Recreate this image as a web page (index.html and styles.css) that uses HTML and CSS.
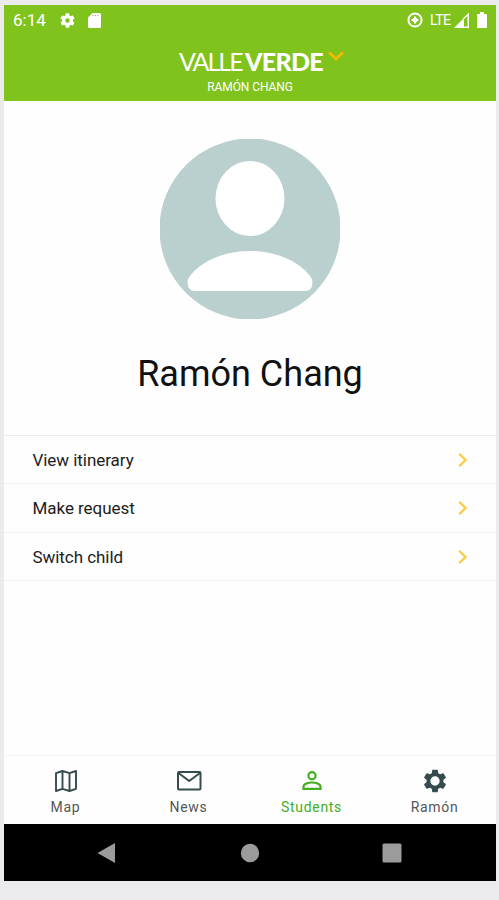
FILE: index.html
```html
<!DOCTYPE html>
<html lang="en">
  <head>
    <meta charset="UTF-8" />
    <meta name="viewport" content="width=device-width, initial-scale=1.0" />
    <title>Valle Verde - Students</title>
    <link rel="stylesheet" href="styles.css">
  </head>
  <body>
    <div class="phone">
      <header>
        <div class="status-bar">
          <span class="time">6:14</span>
          <svg class="status-gear" viewBox="2 2 20 20" fill="currentColor"><path d="M19.14 12.94c.04-.3.06-.61.06-.94 0-.32-.02-.64-.07-.94l2.03-1.58c.18-.14.23-.41.12-.61l-1.92-3.32c-.12-.22-.37-.29-.59-.22l-2.39.96c-.5-.38-1.03-.7-1.62-.94l-.36-2.54c-.04-.24-.24-.41-.48-.41h-3.84c-.24 0-.43.17-.47.41l-.36 2.54c-.59.24-1.13.57-1.62.94l-2.39-.96c-.22-.08-.47 0-.59.22L2.74 8.87c-.12.21-.08.47.12.61l2.03 1.58c-.05.3-.09.63-.09.94s.02.64.07.94l-2.03 1.58c-.18.14-.23.41-.12.61l1.92 3.32c.12.22.37.29.59.22l2.39-.96c.5.38 1.03.7 1.62.94l.36 2.54c.05.24.24.41.48.41h3.84c.24 0 .44-.17.47-.41l.36-2.54c.59-.24 1.13-.56 1.62-.94l2.39.96c.22.08.47 0 .59-.22l1.92-3.32c.12-.22.07-.47-.12-.61l-2.01-1.58zM12 15a3 3 0 1 1 0-6 3 3 0 0 1 0 6z" /></svg>
          <svg class="status-card" viewBox="0 0 13 15" fill="currentColor"><path fill-rule="evenodd" d="M4.500 0H11.500a1.500 1.500 0 0 1 1.500 1.500v12a1.500 1.500 0 0 1-1.500 1.500h-10A1.500 1.500 0 0 1 0 13.500V4.500zM4.500 2v1h1V2zM7 2v1h1V2zM9.500 2v1h1V2z" /></svg>
          <span class="spacer"></span>
          <svg class="status-sync" viewBox="0 0 16 16" fill="none" stroke="currentColor"><circle cx="8" cy="8" r="6.600" stroke-width="2" /><path d="M8 4.600v6.800M4.600 8h6.800" stroke-width="2" /><circle cx="8" cy="8" r="2" stroke-width="1.200" /></svg>
          <span class="network">LTE</span>
          <svg class="status-signal" viewBox="0 0 15 15"><path d="M0 15 10 5v10z" fill="currentColor" /><path d="M9.500 5.700 14.200 1.200v13H10" fill="none" stroke="currentColor" stroke-width="1.400" /></svg>
          <svg class="status-battery" viewBox="0 0 10 16" fill="currentColor"><path d="M3 0h4v2h2a1 1 0 0 1 1 1v12a1 1 0 0 1-1 1H1a1 1 0 0 1-1-1V3a1 1 0 0 1 1-1h2z" /></svg>
        </div>
        <div class="brand">
          <span class="brand-light">VALLE</span>
          <span class="brand-bold">VERDE</span>
          <svg class="brand-arrow" viewBox="0 0 16 10" fill="none"><path d="M1 1.200 8 8l7-6.800" stroke="currentColor" stroke-width="2.600" /></svg>
        </div>
        <div class="brand-student">RAMÓN CHANG</div>
      </header>

      <main>
        <section class="profile">
          <svg class="avatar" viewBox="0 0 180 180">
            <circle cx="90" cy="90" r="90.500" fill="#b9d0ce" />
            <ellipse cx="90" cy="59.500" rx="34.500" ry="37.500" fill="#fff" />
            <path d="M28 140C39 122 65 112 90 112s51 10 62 28c1.500 7-1 12-7 12H35c-6 0-8.500-5-7-12z" fill="#fff" />
          </svg>
          <h1>Ramón Chang</h1>
        </section>

        <ul class="menu">
          <li>
            <span>View itinerary</span>
            <svg class="chevron" viewBox="0 0 10 16" fill="none"><path d="M1.200 1.800 7.500 8l-6.300 6.200" stroke="currentColor" stroke-width="2.300" /></svg>
          </li>
          <li>
            <span>Make request</span>
            <svg class="chevron" viewBox="0 0 10 16" fill="none"><path d="M1.200 1.800 7.500 8l-6.300 6.200" stroke="currentColor" stroke-width="2.300" /></svg>
          </li>
          <li>
            <span>Switch child</span>
            <svg class="chevron" viewBox="0 0 10 16" fill="none"><path d="M1.200 1.800 7.500 8l-6.300 6.200" stroke="currentColor" stroke-width="2.300" /></svg>
          </li>
        </ul>
      </main>

      <nav class="tabs">
        <a class="tab">
          <svg viewBox="0 0 28 28" fill="none" stroke="currentColor" stroke-width="1.900" stroke-linejoin="round"><path d="M4 6.200 10.500 4l7 2.200L24 4v17.800L17.500 24l-7-2.200L4 24zM10.500 4v17.800M17.500 6.200V24" /></svg>
          <span>Map</span>
        </a>
        <a class="tab">
          <svg viewBox="0 0 28 28" fill="none" stroke="currentColor" stroke-width="2" stroke-linejoin="round"><rect x="3" y="5" width="22.500" height="17.500" rx="1" /><path d="M3.500 6 14.200 14 25 6" /></svg>
          <span>News</span>
        </a>
        <a class="tab active">
          <svg viewBox="0 0 28 28" fill="none" stroke="currentColor" stroke-width="2.200"><circle cx="14" cy="8.800" r="3.600" /><path d="M5.500 21.800v-2c0-2.800 5-4.300 8.500-4.300s8.500 1.500 8.500 4.300v2z" /></svg>
          <span>Students</span>
        </a>
        <a class="tab">
          <svg viewBox="0 0 24 24" fill="currentColor"><path fill-rule="evenodd" d="M19.14 12.94c.04-.3.06-.61.06-.94 0-.32-.02-.64-.07-.94l2.03-1.58c.18-.14.23-.41.12-.61l-1.92-3.32c-.12-.22-.37-.29-.59-.22l-2.39.96c-.5-.38-1.03-.7-1.62-.94l-.36-2.54c-.04-.24-.24-.41-.48-.41h-3.84c-.24 0-.43.17-.47.41l-.36 2.54c-.59.24-1.13.57-1.62.94l-2.39-.96c-.22-.08-.47 0-.59.22L2.74 8.87c-.12.21-.08.47.12.61l2.03 1.58c-.05.3-.09.63-.09.94s.02.64.07.94l-2.03 1.58c-.18.14-.23.41-.12.61l1.92 3.32c.12.22.37.29.59.22l2.39-.96c.5.38 1.03.7 1.62.94l.36 2.54c.05.24.24.41.48.41h3.84c.24 0 .44-.17.47-.41l.36-2.54c.59-.24 1.13-.56 1.62-.94l2.39.96c.22.08.47 0 .59-.22l1.92-3.32c.12-.22.07-.47-.12-.61l-2.01-1.58zM12 16a4 4 0 1 1 0-8 4 4 0 0 1 0 8z" /></svg>
          <span>Ramón</span>
        </a>
      </nav>

      <div class="android-nav">
        <svg viewBox="0 0 20 20"><path d="M.5 10 18 0v20z" /></svg>
        <svg viewBox="0 0 20 20"><circle cx="10" cy="10" r="9.200" /></svg>
        <svg viewBox="0 0 20 20"><rect x=".5" y=".5" width="19" height="19" rx="1.500" /></svg>
      </div>
    </div>
  </body>
</html>
```
FILE: styles.css
```css
:root {
  --green: #7fc31c;
  --active: #45ae20;
  --yellow: #fbb900;
  --chevron: #fbcb45;
  --background: #ebebed;
  --line: #f0f0f0;
  --icon: #354b4d;
}

* {
  margin: 0;
  padding: 0;
  box-sizing: border-box;
}

body {
  height: 900px;
  padding: 5px 3px 0 4px;
  font-family: Roboto, sans-serif;
  color: #1c1c1c;
  background-color: var(--background);
  overflow: hidden;
}

svg {
  display: block;
  flex: none;
}

.phone {
  display: flex;
  flex-direction: column;
  height: 876px;
  background-color: #fefefe;
}

header {
  height: 96px;
  color: #fff;
  background-color: var(--green);
}

.status-bar {
  display: flex;
  align-items: center;
  height: 30px;
  padding: 0 9px;
}

.time {
  width: 47px;
  font-size: 17px;
}

.status-gear {
  width: 15px;
  height: 15px;
  margin-right: 13px;
}

.status-card {
  width: 13px;
  height: 15px;
}

.spacer {
  flex: 1;
}

.status-sync {
  width: 16px;
  height: 16px;
  margin-right: 7px;
}

.network {
  width: 24px;
  font-size: 14px;
  letter-spacing: -0.5px;
}

.status-signal {
  width: 15px;
  height: 15px;
  margin-right: 8px;
}

.status-battery {
  width: 10px;
  height: 16px;
}

.brand {
  display: flex;
  align-items: center;
  height: 30px;
  margin-top: 11px;
  padding-left: 175px;
  font-family: Lato, sans-serif;
  font-size: 25px;
  line-height: 30px;
}

.brand-light {
  width: 66px;
  font-weight: 400;
  letter-spacing: -2px;
}

.brand-bold {
  width: 83px;
  font-weight: 900;
  letter-spacing: -0.7px;
}

.brand-arrow {
  width: 16px;
  height: 10px;
  margin-bottom: 10px;
  color: var(--yellow);
}

.brand-student {
  margin-top: 4px;
  font-size: 12px;
  line-height: 14px;
  letter-spacing: -0.1px;
  text-align: center;
}

main {
  flex: 1;
}

.profile {
  display: flex;
  flex-direction: column;
  align-items: center;
  height: 334px;
  padding-top: 38px;
}

.avatar {
  width: 180px;
  height: 180px;
}

h1 {
  margin-top: 33px;
  font-size: 36px;
  font-weight: 400;
  line-height: 44px;
  color: #111;
}

.menu {
  list-style: none;
  border-top: 1.5px solid #ececec;
}

.menu li {
  display: flex;
  align-items: center;
  justify-content: space-between;
  height: 48.3px;
  padding: 1px 28px 0 28.5px;
  font-size: 17px;
  letter-spacing: -0.05px;
  border-bottom: 1.5px solid var(--line);
}

.chevron {
  width: 10px;
  height: 16px;
  color: var(--chevron);
}

.tabs {
  display: flex;
  height: 69px;
  border-top: 1px solid #f3f3f3;
}

.tab {
  flex: 1;
  display: flex;
  flex-direction: column;
  align-items: center;
  padding-top: 11px;
  font-size: 14px;
  line-height: 18px;
  letter-spacing: 0.7px;
  color: #555;
}

.tab svg {
  width: 28px;
  height: 28px;
  margin-bottom: 3px;
  color: var(--icon);
}

.tab.active,
.tab.active svg {
  color: var(--active);
}

.android-nav {
  display: flex;
  align-items: center;
  justify-content: space-between;
  height: 57px;
  padding: 0 94px 0 93px;
  background-color: #000;
}

.android-nav svg {
  width: 20px;
  height: 20px;
  fill: #9b9b9b;
}
```
